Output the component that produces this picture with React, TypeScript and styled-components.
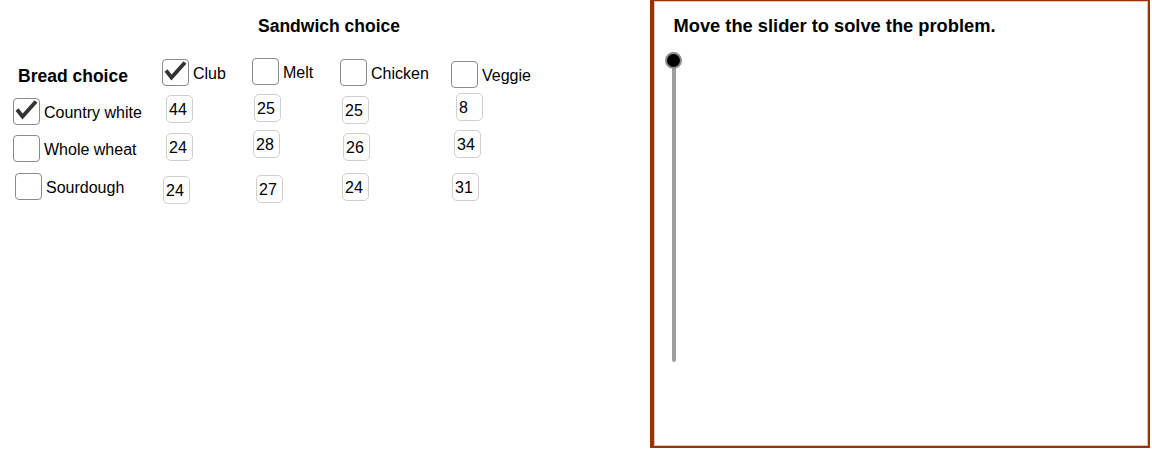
import React from "react";
import styled, { createGlobalStyle } from "styled-components";

const GlobalStyle = createGlobalStyle`
  html, body { margin: 0; padding: 0; background: #ffffff; }
  body { font-family: "Liberation Sans", Arial, sans-serif; color: #000; }
`;

const Page = styled.div`
  display: flex;
  width: 1152px;
  height: 450px;
  overflow: hidden;
`;

const LeftPane = styled.section`
  width: 650px;
  flex: none;
  padding-top: 16px;
  box-sizing: border-box;
`;

const Title = styled.h2`
  margin: 0 0 22px 258px;
  font: bold 17.5px/20px "Liberation Sans", Arial, sans-serif;
  white-space: nowrap;
`;

const Grid = styled.div`
  display: grid;
  grid-template-columns: 149px 90px 88px 111px 1fr;
  grid-template-rows: 35px 37px 42px 40px;
  padding-left: 13px;
`;

const Cell = styled.div<{ $dx: number; $dy: number }>`
  display: flex;
  align-items: center;
  gap: 4px;
  align-self: start;
  justify-self: start;
  margin: ${(p) => p.$dy}px 0 0 ${(p) => p.$dx}px;
`;

const RowHeading = styled.span`
  font: bold 17.5px/20px "Liberation Sans", Arial, sans-serif;
  white-space: nowrap;
`;

const Box = styled.span`
  position: relative;
  display: inline-flex;
  width: 27px;
  height: 27px;
  box-sizing: border-box;
  border: 1.5px solid #8a8a8a;
  border-radius: 4px;
  background: #fff;
  align-items: center;
  justify-content: center;
`;

const Label = styled.span`
  font: 16px/20px "Liberation Sans", Arial, sans-serif;
  padding-top: 2px;
  white-space: nowrap;
`;

const NumberBox = styled.span`
  display: flex;
  align-items: center;
  width: 27px;
  height: 28px;
  box-sizing: border-box;
  padding: 2px 0 0 2px;
  border: 1px solid #cfcfcf;
  border-radius: 5px;
  font: 16px/20px "Liberation Sans", Arial, sans-serif;
  color: #000;
`;

const Panel = styled.section`
  width: 500px;
  height: 448px;
  flex: none;
  box-sizing: border-box;
  border-style: solid;
  border-color: #993300;
  border-width: 1px 2px 2px 4px;
  box-shadow: inset 0 0 0 1px #e2c4b6;
  padding: 15px 0 0 11px;
  display: flex;
  flex-direction: column;
  align-items: flex-start;
`;

const PanelHeading = styled.h2`
  margin: 0 0 0 8.5px;
  font: bold 18.3px/20px "Liberation Sans", Arial, sans-serif;
  white-space: nowrap;
`;

const SliderWrap = styled.div`
  position: relative;
  margin-top: 15.5px;
  padding-top: 8.5px;
  width: 17px;
`;

const Track = styled.div`
  width: 4px;
  height: 302px;
  margin-left: 6.5px;
  border-radius: 2px;
  background: #9e9e9e;
`;

const Knob = styled.div`
  position: absolute;
  top: 0;
  left: 0;
  width: 17px;
  height: 17px;
  box-sizing: border-box;
  border-radius: 50%;
  border: 2.5px solid #8c8c8c;
  background: #000;
`;

const CheckSvg = styled.svg`
  position: absolute;
  left: -1.5px;
  top: -1.5px;
`;

const Check = () => (
  <CheckSvg width="27" height="27" viewBox="0 0 27 27">
    <polyline
      points="4,11.5 9.5,18.5 23,3.5"
      fill="none"
      stroke="#333"
      strokeWidth="3.8"
      strokeLinejoin="miter"
    />
  </CheckSvg>
);

const CheckBox = ({ checked }: { checked?: boolean }) => <Box>{checked && <Check />}</Box>;

type Col = { label: string; checked?: boolean; dx: number; dy: number };
const columns: Col[] = [
  { label: "Club", checked: true, dx: 0, dy: 1 },
  { label: "Melt", dx: 0, dy: 0 },
  { label: "Chicken", dx: 0, dy: 1 },
  { label: "Veggie", dx: 0, dy: 3 },
];

type Val = { v: number; dx: number; dy: number };
type Row = { label: string; checked?: boolean; dx: number; dy: number; values: Val[] };
const rows: Row[] = [
  {
    label: "Country white",
    checked: true,
    dx: 0,
    dy: 5,
    values: [
      { v: 44, dx: 4, dy: 2 },
      { v: 25, dx: 2, dy: 1 },
      { v: 25, dx: 2, dy: 3 },
      { v: 8, dx: 5, dy: 0 },
    ],
  },
  {
    label: "Whole wheat",
    dx: 0,
    dy: 5,
    values: [
      { v: 24, dx: 4, dy: 3 },
      { v: 28, dx: 1, dy: 0 },
      { v: 26, dx: 3, dy: 3 },
      { v: 34, dx: 3, dy: 0 },
    ],
  },
  {
    label: "Sourdough",
    dx: 2,
    dy: 1,
    values: [
      { v: 24, dx: 1, dy: 4 },
      { v: 27, dx: 4, dy: 3 },
      { v: 24, dx: 2, dy: 1 },
      { v: 31, dx: 1, dy: 1 },
    ],
  },
];

export default function App() {
  return (
    <>
      <GlobalStyle />
      <Page>
        <LeftPane>
          <Title>Sandwich choice</Title>
          <Grid>
            <Cell $dx={5} $dy={8}>
              <RowHeading>Bread choice</RowHeading>
            </Cell>
            {columns.map((c) => (
              <Cell key={c.label} $dx={c.dx} $dy={c.dy}>
                <CheckBox checked={c.checked} />
                <Label>{c.label}</Label>
              </Cell>
            ))}
            {rows.map((r) => (
              <React.Fragment key={r.label}>
                <Cell $dx={r.dx} $dy={r.dy}>
                  <CheckBox checked={r.checked} />
                  <Label>{r.label}</Label>
                </Cell>
                {r.values.map((val, i) => (
                  <Cell key={i} $dx={val.dx} $dy={val.dy}>
                    <NumberBox>{val.v}</NumberBox>
                  </Cell>
                ))}
              </React.Fragment>
            ))}
          </Grid>
        </LeftPane>
        <Panel>
          <PanelHeading>Move the slider to solve the problem.</PanelHeading>
          <SliderWrap>
            <Track />
            <Knob />
          </SliderWrap>
        </Panel>
      </Page>
    </>
  );
}
